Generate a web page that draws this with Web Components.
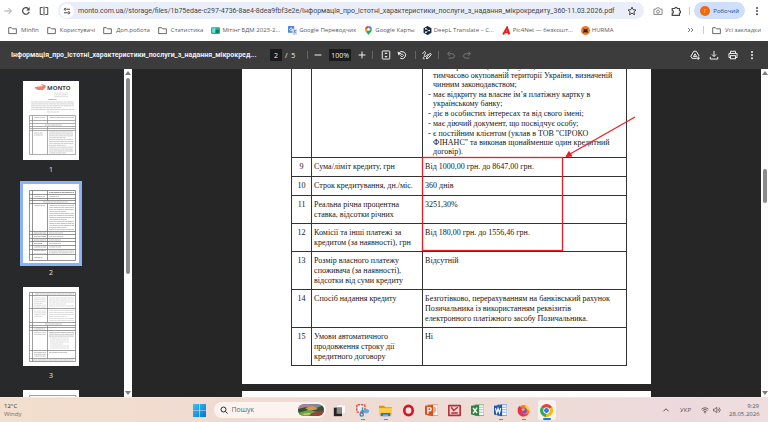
<!DOCTYPE html>
<html lang="uk">
<head>
<meta charset="utf-8">
<title>Інформація про істотні характеристики послуги</title>
<style>
html,body{margin:0;height:100%}
body{font-family:"Open Sans","Noto Sans",sans-serif;overflow:hidden;background:#fff}
</style>
</head>
<body>
<app-shell></app-shell>
<script>
const define=(name,html,setup)=>{
  const t=document.createElement('template');t.innerHTML=html;
  customElements.define(name,class extends HTMLElement{
    constructor(){super();this.attachShadow({mode:'open'}).append(t.content.cloneNode(true));}
    connectedCallback(){if(setup&&!this.ready){this.ready=true;setup(this,this.shadowRoot);}}
  });
};
const reset=`:host,*{box-sizing:border-box}button,input{font:inherit;color:inherit;border:0;background:none;padding:0;margin:0;outline:0;min-width:0}button{display:flex;align-items:center;justify-content:center}a{color:inherit;text-decoration:none}`;

const L='fill="none" stroke="currentColor" stroke-width="1.6"';
const ICONS={
forward:`<path ${L} d="M2 8h11M8.500 3l5 5-5 5"/>`,
reload:`<path fill="none" stroke="currentColor" stroke-width="1.900" d="M13 9.200A5.300 5.300 0 1 1 11.800 4.300"/><path fill="currentColor" d="M13.800 1.500v5.500H8.300z"/>`,
split:`<path ${L} d="M6 2.500H2v11h4M10 2.500h4v11h-4M8 1v14"/>`,
tune:`<g fill="none" stroke="currentColor" stroke-width="2"><path d="M8 4.500h6M2 11.500h6"/><circle cx="4.500" cy="4.500" r="2"/><circle cx="11.500" cy="11.500" r="2"/></g>`,
star:`<path ${L} stroke-linejoin="round" d="M8 1.800l1.900 4.100 4.500.5-3.300 3 .9 4.500L8 11.600l-4 2.300.9-4.500-3.300-3 4.500-.5z"/>`,
camera:`<path ${L} d="M1.500 5h3l1.500-2h4l1.500 2h3v8.500h-13z"/><circle ${L} cx="8" cy="9" r="2.400"/>`,
puzzle:`<path fill="none" stroke="currentColor" stroke-width="1.900" d="M2 4h4a1.900 1.900 0 0 1 4 0h3.500v3.500a1.900 1.900 0 0 1 0 4V15H2v-3.500a2 2 0 0 0 0-4z"/>`,
dots:`<g fill="currentColor"><circle cx="8" cy="3" r="1.600"/><circle cx="8" cy="8" r="1.600"/><circle cx="8" cy="13" r="1.600"/></g>`,
folder:`<path ${L} stroke-linejoin="round" d="M1.200 3h5l1.700 2h7v8.500H1.200z"/>`,
chevrons:`<path ${L} d="M2 4l4 4-4 4M8 4l4 4-4 4"/>`,
sheet:`<rect x="0" y="2" width="16" height="12" rx="2" fill="#17b978"/><path fill="#75dceb" d="M2 4h6v8H2z"/><path fill="#0c8060" d="M8 7h6v5H8z"/>`,
gtrans:`<rect x="0" y="0" width="11" height="12" rx="1" fill="#4a86e8"/><path fill="#d5dce8" d="M7 5h9v11H9z"/><path fill="none" stroke="#fff" stroke-width="1.500" d="M7.500 4.500a2.500 2.500 0 1 0 .5 2.500H5.500"/><path stroke="#55729f" fill="none" d="M10 8h5M12.500 7v1c0 2-1 4-2 5M11 9l3 4"/>`,
gmaps:`<path fill="#34a853" d="M8 16C6.500 12 2 10.500 2 6h12c0 4.500-4.500 6-6 10z"/><path fill="#4285f4" d="M8 0a6 6 0 0 1 6 6H8z"/><path fill="#ea4335" d="M2 6a6 6 0 0 1 6-6v6z"/><path fill="#fbbc04" d="M2 6h6l-4.500 4.500z"/><circle cx="8" cy="6" r="2.500" fill="#fff"/>`,
deepl:`<path fill="#0f2b46" d="M8 0l7 4v8l-5 3-2 1-7-4V4z"/><path stroke="#fff" d="M5 5l5 3-5 3"/><g fill="#fff"><circle cx="5" cy="5" r="1.500"/><circle cx="11" cy="8" r="1.500"/><circle cx="5" cy="11" r="1.500"/></g>`,
picnet:`<path fill="none" stroke="#ef1c1c" stroke-width="3.600" d="M2 15L9 3l4 12M6 11h7"/>`,
hurma:`<circle cx="8" cy="8" r="8" fill="#f47b20"/><path fill="#20252c" d="M4 4l4 2 4-2-1 4 2 4-5-1-5 1 2-4z"/>`,
minus:`<path ${L} d="M2.500 8h11"/>`,
plus:`<path ${L} d="M2.500 8h11M8 2.500v11"/>`,
fit:`<rect ${L} x="2" y="1.500" width="12" height="13" rx="1"/><path fill="currentColor" d="M8 3.500l2.500 3h-5zM8 12.500l2.500-3h-5z"/>`,
rotate:`<path ${L} d="M3 5.500a5.700 5.700 0 1 1 2 7.500"/><path fill="currentColor" d="M1 2.500l1 6 5-3z"/><path fill="none" stroke="currentColor" stroke-width="1.300" d="M8 6l2.500 2.500L8 11 5.500 8.500z"/>`,
draw:`<path ${L} d="M1 6c2-5 6-4 4 0s-2 6 1 4 3-4 5-2"/><path ${L} d="M7 14l1-3 5-6 2 2-5 6zM3 11c-2 2-1 4 1 3"/>`,
undo:`<path ${L} d="M3 6h7a3.500 3.500 0 0 1 0 7H4M6 2.500L2.500 6 6 9.500"/>`,
redo:`<path ${L} d="M13 6H6a3.500 3.500 0 0 0 0 7h6M10 2.500L13.500 6 10 9.500"/>`,
drive:`<path ${L} d="M6 2h4l4.500 7.500M6 2L1.500 10l2 3.500H10M8 6l-2.500 4.500h5z"/><path ${L} d="M13 10v6M10 13h6"/>`,
download:`<path ${L} d="M8 1.500v8.500M4.500 7L8 10.500 11.500 7M2 11v3.500h12V11"/>`,
print:`<path ${L} d="M4 5V2h8v3M4 12H1.500V5.500h13V12H12"/><rect ${L} x="4" y="9" width="8" height="5"/>`,
search:`<circle cx="7" cy="7" r="5" fill="none" stroke="currentColor" stroke-width="1.900"/><path stroke="currentColor" stroke-width="2" d="M11 11l4 4"/>`,
win:`<defs><linearGradient id="g" x2="1" y2="1"><stop stop-color="#35c5f5"/><stop offset="1" stop-color="#0873cf"/></linearGradient></defs><path fill="url(#g)" d="M0 0h7.600v7.600H0zM8.400 0H16v7.600H8.400zM0 8.400h7.600V16H0zM8.400 8.400H16V16H8.400z"/>`,
taskview:`<rect x="4.500" y="1" width="11" height="11" rx="1" fill="#fafafa" stroke="#c9c4c3" stroke-width=".5"/><path fill="#242424" d="M1 4.500h10V15H1z"/><path fill="#8b8b8b" d="M4.500 4.500H11V12H4.500z"/>`,
snip:`<rect x="1" y="1" width="10" height="9" rx="1" fill="#f3eeee" stroke="#d2554c" stroke-width="1.800" stroke-dasharray="3 1"/><path stroke="#3098d2" stroke-width="1.800" d="M8 4v8M6 8.500h10"/><circle cx="7" cy="13" r="2" fill="none" stroke="#2586c2" stroke-width="1.500"/><circle cx="13" cy="9" r="2" fill="none" stroke="#53b5e8" stroke-width="1.500"/>`,
explorer:`<path fill="#d99a13" d="M0 2h6l2 2h8v5H0z"/><path fill="#fccc42" d="M0 5h16v9H0z"/><path fill="#1d7ad2" d="M2 11h12v4H2z"/><path fill="#74b9ee" d="M5 13h6v2H5z"/>`,
opera:`<ellipse cx="8" cy="8" rx="5.200" ry="5.700" fill="#f1e1dc" stroke="#df1022" stroke-width="3.200"/>`,
ppt:`<rect x="4" y="1" width="12" height="13" fill="#fff" stroke="#e58a68"/><path fill="#f2aa82" d="M10 3a4 4 0 1 1 0 8z"/><path fill="#d94f1d" d="M0 2l10-1v14L0 13z"/><path fill="none" stroke="#fff" stroke-width="1.700" d="M3.500 12V4.500h2a2 2 0 0 1 0 4h-2"/>`,
redapp:`<rect x="0" y="1" width="16" height="14" rx="1" fill="#b72f3a"/><path fill="#efd4cf" d="M2 3h12v10H2z"/><path stroke="#b72f3a" stroke-width="1.700" fill="none" d="M4 4l3 4 5-4M4 11h8"/>`,
excel:`<rect x="5" y="1" width="11" height="13" fill="#fff" stroke="#69aa72"/><path stroke="#83bd89" d="M10 4h5M10 7h5M10 10h5"/><path fill="#2e8543" d="M0 2l10-1v14L0 13z"/><path stroke="#fff" stroke-width="1.700" d="M2.500 5l5 6M7.500 4.500L2.500 11.500"/>`,
word:`<rect x="5" y="1" width="11" height="13" fill="#fff" stroke="#5790d2"/><path stroke="#6b9ed8" d="M10 4h5M10 7h5M10 10h5"/><path fill="#2059ae" d="M0 2l10-1v14L0 13z"/><path fill="none" stroke="#fff" stroke-width="1.400" d="M1.800 5l1.500 6L5 5.500 6.800 11l1.400-6"/>`,
firefox:`<circle cx="8" cy="8.500" r="7.300" fill="#ff7a22"/><path fill="#ffd13b" d="M9 0c3 1 7 4 6.300 9L11 5z"/><path fill="#e8314c" d="M1 5l2-3 1 2 3 1-2 5 4 3 5-1c-3 5-13 4-13-4z"/><circle cx="8.500" cy="8" r="3.500" fill="#7650cf"/><path fill="#ffaa28" d="M5 6l4-1 1 2-3 2z"/>`,
chrome:`<path fill="#ea4335" d="M8 8L1.200 4A8 8 0 0 1 15 4z"/><path fill="#fbbc05" d="M8 8l7-4A8 8 0 0 1 7.500 16z"/><path fill="#34a853" d="M8 8l-.5 8A8 8 0 0 1 1.200 4z"/><circle cx="8" cy="8" r="3.900" fill="#fff"/><circle cx="8" cy="8" r="3" fill="#3978e8"/>`,
up:`<path fill="none" stroke="currentColor" stroke-width="2" d="M3 10.500l5-5 5 5"/>`,
wifi:`<path fill="none" stroke="currentColor" stroke-width="1.800" d="M1 6.500a10 10 0 0 1 14 0M3.200 9a7 7 0 0 1 9.600 0M5.500 11.500a3.500 3.500 0 0 1 5 0"/><circle cx="8" cy="13.500" r="1.300" fill="currentColor"/>`,
sound:`<path fill="none" stroke="currentColor" stroke-width="1.500" d="M1 6h2.500L7.500 2.500v11L3.500 10H1zM10 5.500a4 4 0 0 1 0 5M12 3a7 7 0 0 1 0 10"/>`
};
define('ui-icon',`<style>:host{display:block;width:10px;height:10px;flex:none}svg{display:block;width:100%;height:100%}</style>`,
 (h,r)=>r.append(Object.assign(document.createElement('template'),{innerHTML:`<svg viewBox="0 0 16 16" aria-hidden="true">${ICONS[h.getAttribute('name')]}</svg>`}).content));

define('v-rule',`<style>:host{display:block;width:1px;height:8px;background:var(--rule,#b5cdf3);flex:none}</style>`);

define('address-row',`<style>${reset}
:host{display:flex;align-items:center;height:21px;padding:0 6px 0 3px;color:#474747;font-size:7px;background:#fff}
.nav,.ext{display:flex;align-items:center;gap:8px}
.nav button:first-child{color:#a5a5a5}
.omni{flex:1;display:flex;align-items:center;gap:4px;height:17px;border-radius:9px;background:#e9eef8;margin:0 9px;padding:0 7px 0 2px;min-width:0}
.tune{width:14px;height:14px;border-radius:7px;background:#fff;flex:none}.tune ui-icon{width:8px;height:8px}
input{flex:1;line-height:14px;height:14px;color:#45474a;font-family:Roboto,sans-serif}
.profile{height:17px;border-radius:9px;background:#cfdffa;padding:0 6px;gap:3px;color:#2e4a7c;font-size:6px;margin:0 -1px 0 -4px}
.av{display:flex;align-items:center;justify-content:center;width:10px;height:10px;border-radius:5px;background:#f0690c;color:#ffc08d;font-size:6px}
</style>
<div class="nav"><button aria-label="Вперед"><ui-icon name="forward"></ui-icon></button><button aria-label="Оновити"><ui-icon name="reload"></ui-icon></button><button aria-label="Розділити"><ui-icon name="split"></ui-icon></button></div>
<div class="omni"><button class="tune" aria-label="Про сайт"><ui-icon name="tune"></ui-icon></button>
<input aria-label="Адреса" value="monto.com.ua//storage/files/1b75edae-c297-4736-8ae4-8dea9fbf3e2e/Інформація_про_істотні_характеристики_послуги_з_надання_мікрокредиту_360-11.03.2026.pdf">
<button aria-label="Закладка"><ui-icon name="star"></ui-icon></button></div>
<div class="ext"><button aria-label="Камера"><ui-icon name="camera" style="color:#888"></ui-icon></button><button aria-label="Розширення"><ui-icon name="puzzle"></ui-icon></button><v-rule></v-rule>
<button class="profile"><span class="av">Г</span><span>Робочий</span></button><button aria-label="Меню"><ui-icon name="dots"></ui-icon></button></div>`);

define('book-mark',`<style>${reset}:host{display:block;flex:none}a{display:flex;align-items:center;gap:4px}:host([icon]) a{gap:2px}ui-icon{width:9px;height:9px}</style><a href="#"><slot></slot></a>`,
 (h,r)=>{const i=document.createElement('ui-icon');i.setAttribute('name',h.getAttribute('icon')||'folder');r.querySelector('a').prepend(i);});
define('bookmark-row',`<style>${reset}
:host{display:flex;align-items:center;gap:8px;height:20px;padding:0 7px 2px 8px;font-size:6px;line-height:16px;color:#5b5b5b;background:#fff;white-space:nowrap}
.more{margin-left:auto}.more ui-icon{width:8px;height:8px}
</style>
<book-mark>Minfin</book-mark><book-mark>Користувачі</book-mark><book-mark>Доп.робота</book-mark><book-mark>Статистика</book-mark><book-mark icon="sheet">Мітінг БДМ 2023-2...</book-mark><book-mark icon="gtrans">Google Переводчик</book-mark><book-mark icon="gmaps">Google Карты</book-mark><book-mark icon="deepl">DeepL Translate – С...</book-mark><book-mark icon="picnet">Pic4Net — безкошт...</book-mark><book-mark icon="hurma">HURMA</book-mark>
<button class="more" aria-label="Інші закладки"><ui-icon name="chevrons"></ui-icon></button><v-rule></v-rule><book-mark>Усі закладки</book-mark>`);

define('pdf-toolbar',`<style>${reset}
:host{display:flex;align-items:center;height:28px;padding:0 11px;background:#3c3c3c;color:#eee;font-size:7px;line-height:11px;--rule:#666;white-space:nowrap}
.title{font-family:Roboto,sans-serif;font-weight:700;flex:0 1 247px}
.pager,.zoom,.tools,.edit,.right{display:flex;align-items:center}
.pager{margin-left:12px;gap:3px;padding-right:12px}
.zoom{gap:6px;padding:0 5px}
.tools{gap:6px;padding:0 8px}
input{background:#191b1c;height:12px;text-align:center}
.pg{width:12px}.zm{width:22px}
.hist{display:flex;gap:6px;padding-left:7px;color:#777}
.right{margin-left:auto;gap:9px}
.edit{padding:0 6px}
</style>
<span class="title">Інформація_про_істотні_характеристики_послуги_з_надання_мікрокред...</span>
<div class="pager"><input class="pg" aria-label="Сторінка" value="2"><span>/&nbsp; 5</span></div><v-rule></v-rule>
<div class="zoom"><button aria-label="Зменшити"><ui-icon name="minus"></ui-icon></button><input class="zm" aria-label="Масштаб" value="100%"><button aria-label="Збільшити"><ui-icon name="plus"></ui-icon></button></div><v-rule></v-rule>
<div class="tools"><button aria-label="За розміром"><ui-icon name="fit"></ui-icon></button><button aria-label="Обернути"><ui-icon name="rotate"></ui-icon></button></div><v-rule></v-rule>
<div class="edit"><button aria-label="Малювати"><ui-icon name="draw"></ui-icon></button></div><v-rule></v-rule>
<div class="hist"><button aria-label="Скасувати"><ui-icon name="undo"></ui-icon></button><button aria-label="Повторити"><ui-icon name="redo"></ui-icon></button></div>
<div class="right"><button aria-label="Диск"><ui-icon name="drive"></ui-icon></button><button aria-label="Завантажити"><ui-icon name="download"></ui-icon></button><button aria-label="Друк"><ui-icon name="print"></ui-icon></button><button aria-label="Ще"><ui-icon name="dots"></ui-icon></button></div>`);

define('scroll-bar',`<style>
:host{box-sizing:border-box;display:flex;flex-direction:column;width:8px;flex:none;background:#fcfcfc;align-items:center;padding:2px 0}
.t{flex:var(--before,0)}.thumb{flex:var(--size,1);width:4px;border-radius:2px;background:#8b8b8b}.b{flex:var(--after,1)}
i{width:0;border:3px solid transparent;border-top:0;border-bottom:4px solid #7d7d7d;margin:0 0 3px}
.d{border-top:4px solid #7d7d7d;border-bottom:0;margin:3px 0 0}
</style><i></i><div class="t"></div><div class="thumb"></div><div class="b"></div><i class="d"></i>`);

const tline=(x,y,w,c='#aaa')=>`<path d="M${x} ${y}h${w}" stroke="${c}" stroke-width=".7" stroke-dasharray="3 .4 5 .3 2 .4" stroke-dashoffset="${(y*3.7)%11}"/>`;
const block=(x,y,w,n,s=2,c)=>Array.from({length:n},(_,i)=>tline(x,y+i*s,i%4==3?w*.7:w,c)).join('');
const grid=(top,bottom,rows,mids,c)=>`<g stroke="${c}" stroke-width=".7" fill="none"><path d="M6.500 ${top}H52.500V${bottom}H6.500zM9.500 ${top}V${bottom}"/>${rows.map(y=>`<path d="M6.500 ${y}H52.500"/>`).join('')}${mids.map(([a,b])=>`<path d="M24.500 ${a}V${b}"/>`).join('')}</g>`;
const THUMBS={
1:`<path fill="#e98673" d="M12 6l8-1-2-2 4 1 1 2-3 3-5 0-2-1-1-1z"/>${block(31,12,14,3,1.800,'#ccc')}${tline(25,18.500,9,'#999')}${block(8,21,43,5,1.900,'#bbb')}${tline(24,31,12,'#bbb')}${grid(34.500,73.500,[39.500,42.500,45.500,47.500,49.500],[[34.500,42.500],[45.500,73.500]],'#888')}${block(11,36.500,11,1,2)}${block(26,36.500,25,1,2)}${block(22,44,17,1)}${block(26,51,24,12,1.900,'#b5b5b5')}${block(11,52,9,2)}`,
2:`${grid(6.500,76.500,[10.500,14.500,16.500,19.500,47.500,50.500,54.500,57.500,61.500,65.500,70.500],[[6.500,16.500],[19.500,76.500]],'#666')}${block(26,8.500,25,1,1.600,'#777')}${block(11,12.500,11,1,1.800)}${block(26,12.500,10,1)}${block(20,18,25,1)}${block(11,21.500,11,1)}${block(26,21.500,25,13,2,'#aaa')}${block(11,49,12,8,3.500,'#999')}${block(26,49,14,2,3.500)}${block(26,56,12,3,3.500)}${block(26,67,25,2,1.800)}`,
3:`${grid(5.500,74.500,[8.500,21.500,35.500,38.500,40.500,43.500,63.500,71.500],[[8.500,35.500],[38.500,71.500]],'#777')}${tline(12,7,39)}${block(11,11,12,6,1.800,'#ccc')}${block(26,11,25,5,2,'#ccc')}${block(11,24,12,4,1.800,'#ccc')}${block(26,23.500,25,6,2,'#ccc')}${tline(22,37,17)}${block(11,42,11,1)}${block(26,45.500,25,3,1.800)}${block(27,51,19,6,2,'#ccc')}${block(11,45.500,12,2,2,'#bbb')}${block(11,65.500,12,3,1.800)}${tline(26,65.500,18)}${tline(10,73,40)}`,
4:`<path fill="none" stroke="#888" stroke-width=".8" d="M6.500 20V5.500H53V20"/>`};
define('page-thumb',`<style>${reset}
:host{display:flex;flex-direction:column;align-items:center;height:103px;flex:none;color:#e3e3e3;font-size:7px;line-height:19px}
button{display:block;position:relative;width:56px;height:79px;background:#fff}
:host([current]) button{outline:3px solid #8ab4f8}
:host([peek]) .label{display:none}
svg{display:block;width:56px;height:79px}
.brand{position:absolute;left:24px;top:3px;font:700 6px/8px "Open Sans",sans-serif;color:#444}
</style><button></button><span class="label"><slot></slot></span>`,
 (h,r)=>{const n=h.textContent.trim();const b=r.querySelector('button');b.setAttribute('aria-label','Сторінка '+n);b.innerHTML=`<svg viewBox="0 0 56 79">${THUMBS[n||4]}</svg>`+(n=='1'?'<span class="brand">MONTO</span>':'');});
define('thumb-rail',`<style>:host{display:flex;flex:none;background:#28292a;min-height:0}.list{box-sizing:border-box;width:124px;padding:12px 22px 0 0;overflow:hidden}scroll-bar{--before:0;--size:193;--after:113}</style>
<div class="list"><page-thumb>1</page-thumb><page-thumb current>2</page-thumb><page-thumb>3</page-thumb><page-thumb peek></page-thumb></div><scroll-bar></scroll-bar>`);

define('loan-terms',`<style>${reset}
:host{display:block;position:relative;font:8px/10px "Liberation Serif",serif;color:#161616}
table{border-collapse:collapse;width:100%;table-layout:fixed}
td{border:1px solid #333;padding:4px 0 3px 2px;vertical-align:top;white-space:nowrap}
.n{width:20px;text-align:center;padding-left:0}.l{width:111px}
tr:first-child td{border-top:0;padding-top:0;padding-bottom:0;height:88px}
.h1 td{height:19px}.h2 td{height:28px}.h3 td{height:38px}
ul{margin:-7px 0 0;padding:0 0 0 8px;list-style:none;display:flex;flex-direction:column;gap:1px;line-height:9px}
li{position:relative}li.b::before{content:"-";position:absolute;left:-5px}
svg{position:absolute;left:130px;top:46px;width:216px;height:138px}
</style>
<table>
<tr><td class="n"></td><td class="l"></td><td><ul><li>та не проживає (не перебуває) на<br>тимчасово окупованій території України, визначеній<br>чинним законодавством;</li><li class="b">має відкриту на власне ім’я платіжну картку в<br>українському банку;</li><li class="b">діє в особистих інтересах та від свого імені;</li><li class="b">має діючий документ, що посвідчує особу;</li><li class="b">є постійним клієнтом (уклав в ТОВ "СІРОКО<br>ФІНАНС" та виконав щонайменше один кредитний<br>договір).</li></ul></td></tr>
<tr class="h1"><td class="n">9</td><td>Сума/ліміт кредиту, грн</td><td>Від 1000,00 грн. до 8647,00 грн.</td></tr>
<tr class="h1"><td class="n">10</td><td>Строк кредитування, дн./міс.</td><td>360 днів</td></tr>
<tr class="h2"><td class="n">11</td><td>Реальна річна процентна<br>ставка, відсотки річних</td><td>3251,30%</td></tr>
<tr class="h2"><td class="n">12</td><td>Комісії та інші платежі за<br>кредитом (за наявності), грн</td><td>Від 180,00 грн. до 1556,46 грн.</td></tr>
<tr class="h3"><td class="n">13</td><td>Розмір власного платежу<br>споживача (за наявності),<br>відсотки від суми кредиту</td><td>Відсутній</td></tr>
<tr class="h3"><td class="n">14</td><td>Спосіб надання кредиту</td><td>Безготівково, перерахуванням на банківський рахунок<br>Позичальника із використанням реквізитів<br>електронного платіжного засобу Позичальника.</td></tr>
<tr class="h3"><td class="n">15</td><td>Умови автоматичного<br>продовження строку дії<br>кредитного договору</td><td>Ні</td></tr>
</table>
<svg viewBox="0 0 216 138" aria-hidden="true"><rect x="1.500" y="42.500" width="140" height="93" fill="none" stroke="#ed1c24" stroke-width="1.300"/><path d="M214 2L149 39" stroke="#ed1c24" stroke-width="1.200"/><path d="M145 41.500l3-5 3 4.500z" fill="#ed1c24" stroke="#ed1c24"/></svg>`);
define('pdf-viewer',`<style>
:host{display:flex;flex:1;min-width:0;background:#262627;overflow:hidden}
main{flex:1;min-width:0;overflow:hidden}
.page{width:65%;margin:0 auto 7px;background:#fff;box-sizing:border-box;padding:0 24px 18px 49px}
.next{height:20px}
scroll-bar{width:7px;--before:91;--size:34;--after:184}
</style><main><div class="page"><loan-terms></loan-terms></div><div class="page next"></div></main><scroll-bar></scroll-bar>`);

define('task-app',`<style>${reset}:host{display:block;flex:none}
button{position:relative;width:18px;height:20px;border-radius:3px}ui-icon{width:13px;height:13px}
:host([open]) button::after{content:"";position:absolute;bottom:0;width:4px;height:1px;background:#8b8380}
:host([active]) button{background:#f9f1ee}:host([active]) button::after{width:8px;height:2px;background:#1c7bd6;border-radius:1px}
</style><button></button>`,(h,r)=>{const b=r.querySelector('button'),n=h.getAttribute('icon');b.setAttribute('aria-label',n);b.innerHTML=`<ui-icon name="${n}"></ui-icon>`;});
define('task-bar',`<style>${reset}
:host{display:grid;grid-template-columns:1fr auto 1fr;align-items:center;height:25px;flex:none;padding:0 9px 0 4px;font-size:6px;line-height:8px;color:#4d4544;background:linear-gradient(90deg,#f3dfcd,#f0dbd1 30%,#eeddd6 60%,#edd9dc 90%,#eedfdf);border-top:1px solid #eee6e2}
.weather{color:#333}.weather span{display:block;color:#76696a}
.apps{display:flex;align-items:center;gap:5px;padding-right:17px}
.search{display:flex;align-items:center;gap:4px;width:112px;height:16px;border-radius:8px;background:#faf3ef;padding:0 2px 0 6px}
.search input{flex:1;font-size:7px}input::placeholder{color:#6c6462;opacity:1}
.search ui-icon{width:8px;height:8px;color:#222}
.pic{width:26px;height:12px;flex:none}
.tray{display:flex;align-items:center;justify-content:flex-end;color:#5c5355}
.tray ui-icon{width:8px;height:8px}.net{gap:4px;margin:0 8px 0 10px}.lang{margin-left:10px}
time{text-align:right;width:30px;white-space:nowrap}
</style>
<div class="weather">12°C<span>Windy</span></div>
<div class="apps"><task-app icon="win"></task-app>
<label class="search"><ui-icon name="search"></ui-icon><input type="search" placeholder="Пошук" aria-label="Пошук"><svg class="pic" viewBox="0 0 26 12" aria-hidden="true"><clipPath id="c"><rect width="26" height="12" rx="6"/></clipPath><g clip-path="url(#c)"><path fill="#7d8b9a" d="M0 0h26v12H0z"/><path fill="#b07f9a" d="M0 1l9-1 8 3-5 2H0z"/><path fill="#315234" d="M0 5l8-2 8 2 10-4v7l-12 1-14 2z"/><path fill="#d29b53" d="M7 4l8-2 5 3-8 2z"/><path fill="#6da63a" d="M0 9l10-3 10 2-6 4H0z"/><path fill="#9b4136" d="M14 9l12-3v6H11z"/><path fill="#e5c88d" d="M4 10l7-1 2 1-6 1z"/></g></svg></label>
<task-app icon="taskview"></task-app><task-app icon="snip" open></task-app><task-app icon="explorer" open></task-app><task-app icon="opera"></task-app><task-app icon="ppt"></task-app><task-app icon="redapp"></task-app><task-app icon="excel"></task-app><task-app icon="word" open></task-app><task-app icon="firefox" open></task-app><task-app icon="chrome" open active></task-app></div>
<div class="tray"><button aria-label="Приховані значки"><ui-icon name="up"></ui-icon></button><span class="lang">УКР</span><button class="net" aria-label="Мережа"><ui-icon name="wifi"></ui-icon><ui-icon name="sound"></ui-icon></button><time>9:29<br>28.05.2026</time></div>`);

define('app-shell',`<style>:host{display:flex;flex-direction:column;height:100vh}
.work{display:flex;flex:1;min-height:0}</style>
<address-row></address-row><bookmark-row></bookmark-row><pdf-toolbar></pdf-toolbar>
<div class="work"><thumb-rail></thumb-rail><pdf-viewer></pdf-viewer></div><task-bar></task-bar>`);
</script>
</body>
</html>
